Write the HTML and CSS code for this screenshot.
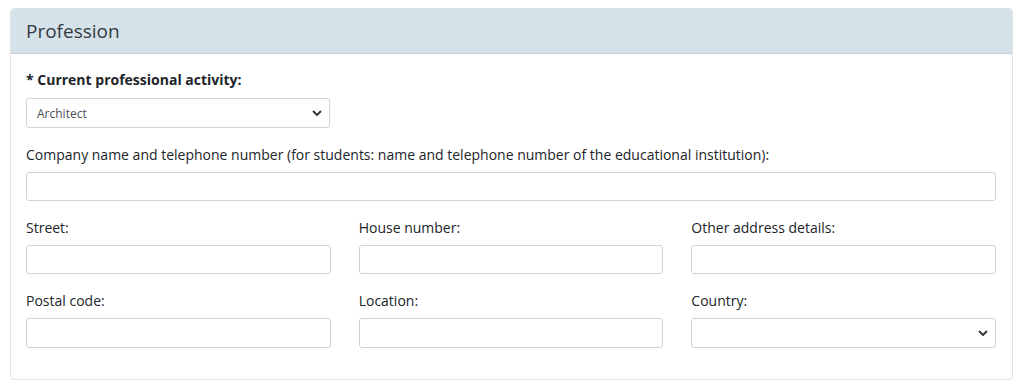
FILE: index.html
```html
<!DOCTYPE html>
<html lang="en">
<head>
    <meta charset="UTF-8">
    <meta name="viewport" content="width=device-width, initial-scale=1.0">
    <title>Profession</title>
    <link rel="stylesheet" href="styles.css">
</head>
<body>
    <div class="card">
        <div class="card-header">Profession</div>

        <div class="card-body">
            <div class="form-group">
                <label class="label-required" for="activity">* Current professional activity:</label>
                <div class="select-wrap select-short">
                    <select class="form-control" id="activity">
                        <option>Architect</option>
                    </select>
                    <svg class="select-arrow" width="10" height="6" viewBox="0 0 10 6"><path d="M1 1l4 4 4-4" fill="none" stroke="#343a40" stroke-width="2"/></svg>
                </div>
            </div>

            <div class="form-group">
                <label for="company">Company name and telephone number (for students: name and telephone number of the educational institution):</label>
                <input type="text" class="form-control" id="company">
            </div>

            <div class="form-row">
                <div class="form-group">
                    <label for="street">Street:</label>
                    <input type="text" class="form-control" id="street">
                </div>
                <div class="form-group">
                    <label for="house">House number:</label>
                    <input type="text" class="form-control" id="house">
                </div>
                <div class="form-group">
                    <label for="other">Other address details:</label>
                    <input type="text" class="form-control" id="other">
                </div>
            </div>

            <div class="form-row">
                <div class="form-group">
                    <label for="postal">Postal code:</label>
                    <input type="text" class="form-control" id="postal">
                </div>
                <div class="form-group">
                    <label for="location">Location:</label>
                    <input type="text" class="form-control" id="location">
                </div>
                <div class="form-group">
                    <label for="country">Country:</label>
                    <div class="select-wrap">
                        <select class="form-control" id="country">
                            <option></option>
                        </select>
                        <svg class="select-arrow" width="10" height="6" viewBox="0 0 10 6"><path d="M1 1l4 4 4-4" fill="none" stroke="#343a40" stroke-width="2"/></svg>
                    </div>
                </div>
            </div>
        </div>
    </div>
</body>
</html>
```

FILE: styles.css
```css
* {
    margin: 0;
    padding: 0;
    box-sizing: border-box;
}
body {
    background: #fff;
    color: #212529;
    font-family: "Open Sans", "Noto Sans", sans-serif;
    font-size: 14px;
    line-height: 1.5;
    padding: 8px 11px 0 10px;
}
.card {
    border: 1px solid #dfe3e7;
    border-radius: 4px;
    overflow: hidden;
}
.card-header {
    background: #d6e2ea;
    border-bottom: 1px solid #c3cfd8;
    height: 45px;
    padding: 0 15px;
    font-size: 19px;
    line-height: 44px;
    color: #343a40;
}
.card-body {
    padding: 15px 16px 15px 15px;
}
.form-group {
    margin-bottom: 16px;
}
.form-row .form-group {
    margin-bottom: 0;
}
.form-row {
    display: grid;
    grid-template-columns: 1fr 1fr 1fr;
    column-gap: 28px;
    margin-bottom: 16px;
}
label {
    display: block;
    margin-bottom: 7px;
    color: #212529;
}
.label-required {
    font-weight: bold;
    margin-bottom: 8px;
}
.form-control {
    display: block;
    width: 100%;
    height: 29px;
    padding: 4px 10px;
    border: 1px solid #ced4da;
    border-radius: 3px;
    background: #fff;
    font-family: inherit;
    font-size: 12px;
    color: #495057;
    outline: none;
}
select.form-control {
    appearance: none;
    -webkit-appearance: none;
    height: 30px;
}
.form-row:last-child input.form-control {
    height: 30px;
}
.select-wrap {
    position: relative;
}
.select-short {
    width: 304px;
}
.select-arrow {
    position: absolute;
    right: 8px;
    top: 12px;
    pointer-events: none;
}
```
